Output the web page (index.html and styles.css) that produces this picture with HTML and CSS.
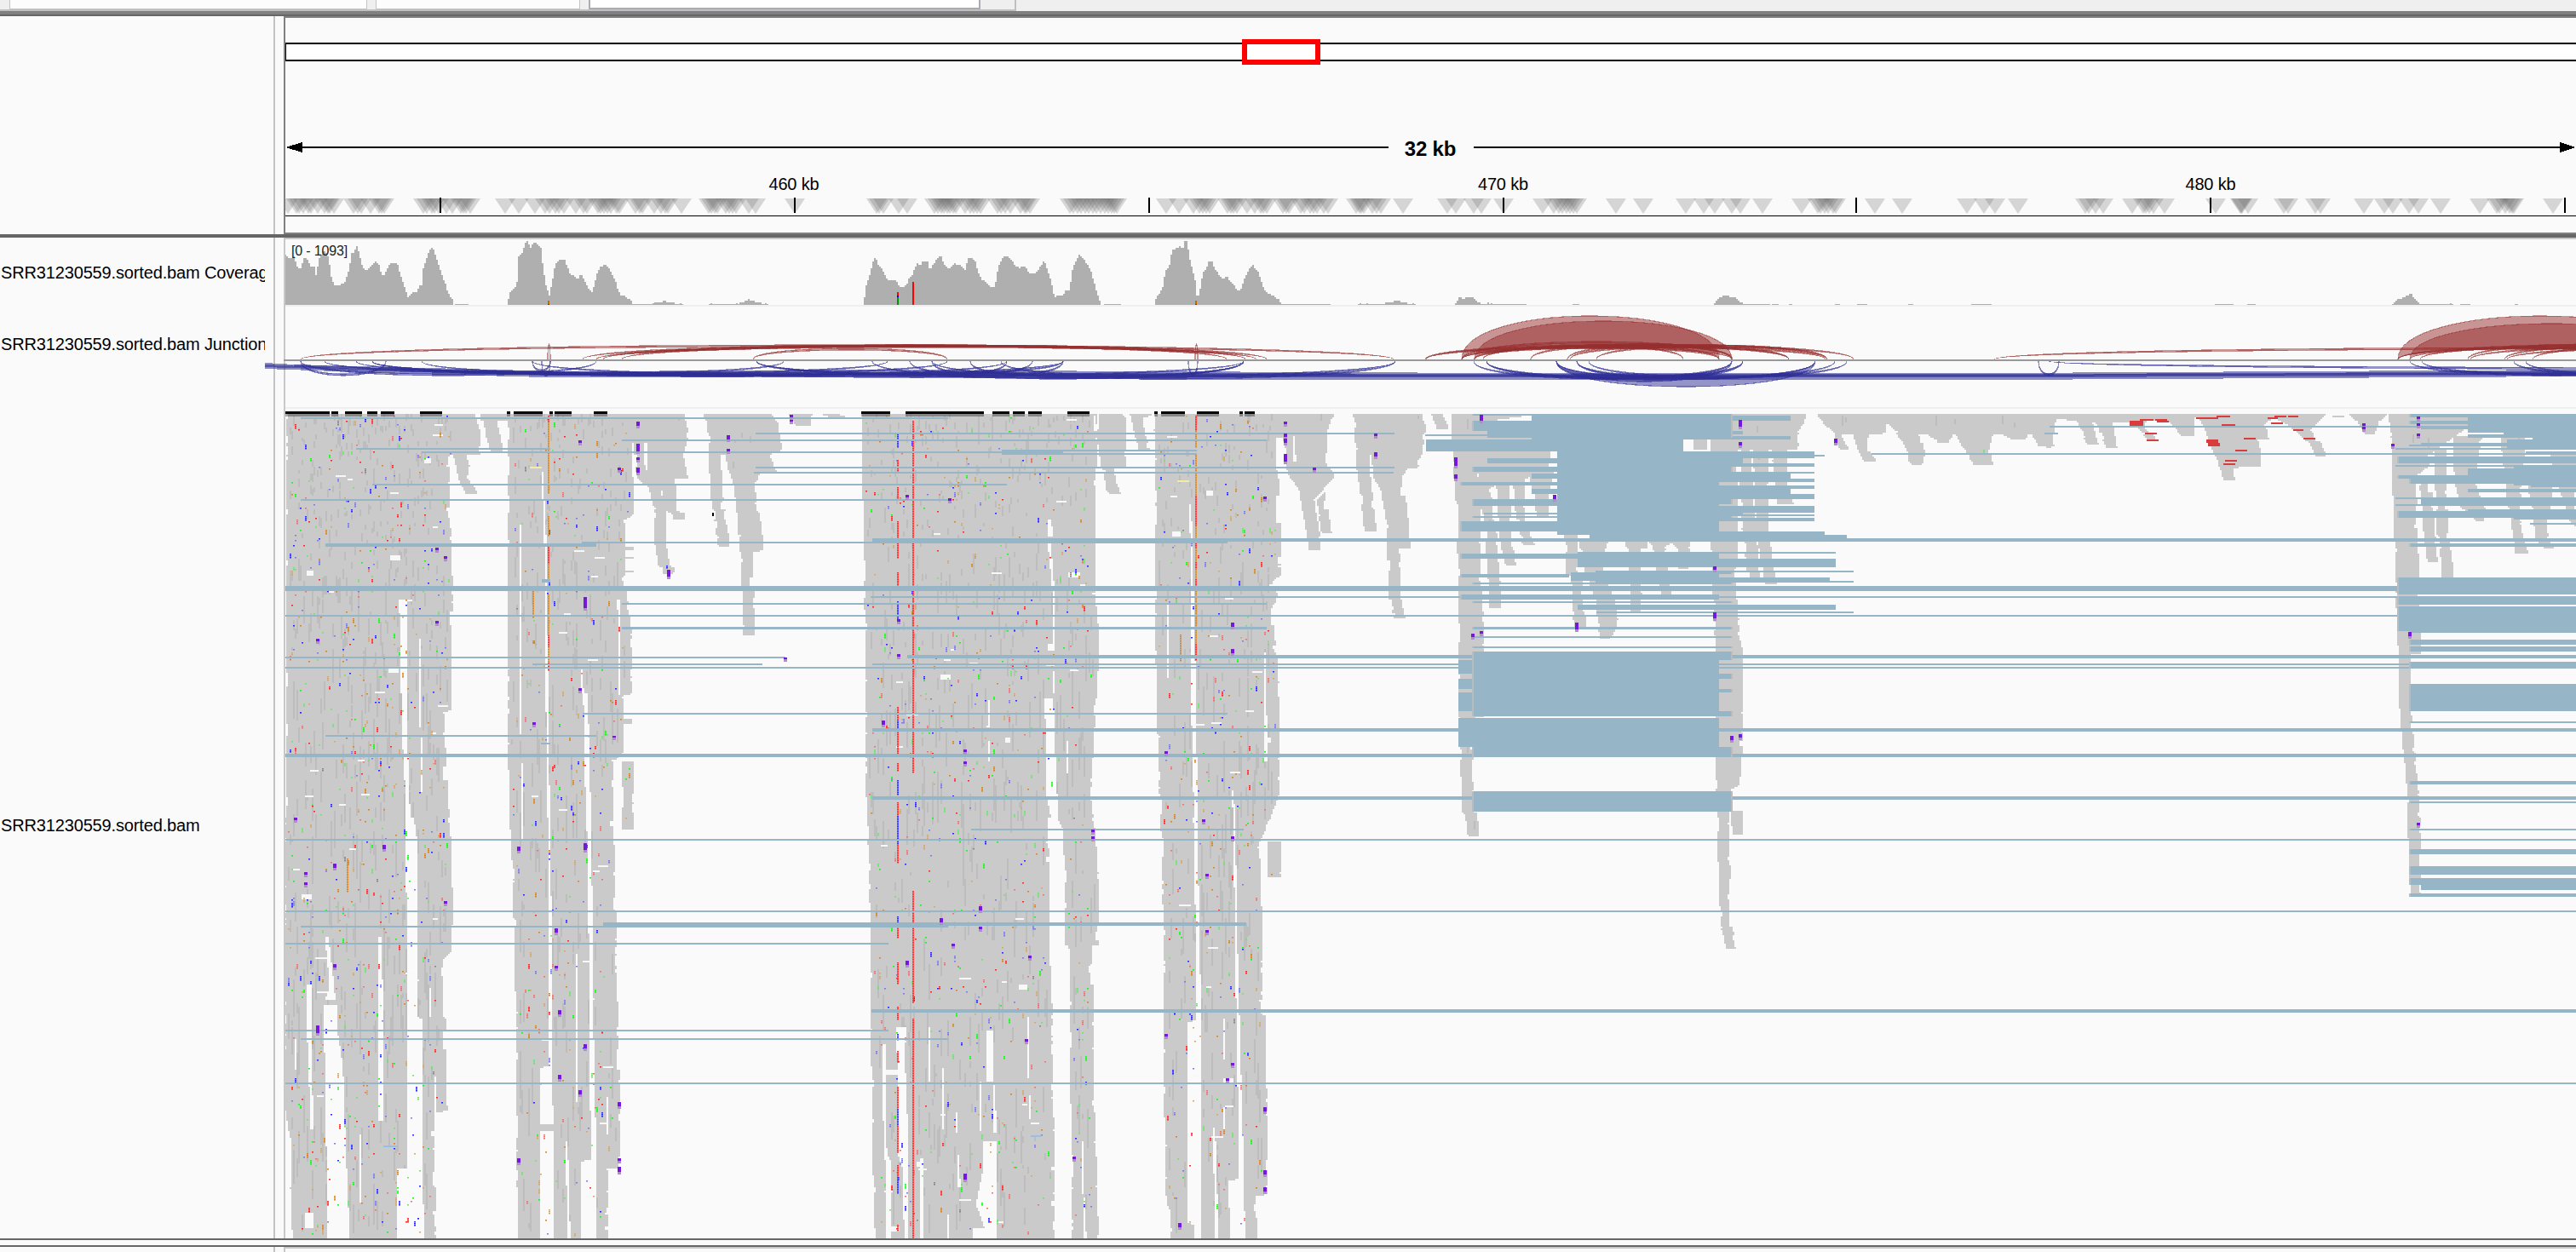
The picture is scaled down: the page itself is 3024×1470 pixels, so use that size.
FILE: index.html
```html
<!DOCTYPE html>
<html lang="en">
<head>
<meta charset="utf-8">
<title>Genome browser</title>
<link rel="stylesheet" href="styles.css">
</head>
<body>
<div class="toolbar">
  <div class="fields">
    <div class="field genome"></div>
    <div class="field chromosome"></div>
    <div class="field locus"></div>
  </div>
</div>
<div class="divider-top"></div>
<div class="row header">
  <div class="names"></div>
  <div class="gutter"></div>
  <div class="data">
    <svg id="ruler" viewBox="335 21 2689 252" width="2689" height="252"></svg>
  </div>
</div>
<div class="row tracks">
  <div class="names">
    <div class="name coverage-name">SRR31230559.sorted.bam Coverage</div>
    <div class="name junction-name">SRR31230559.sorted.bam Junctions</div>
    <div class="name reads-name">SRR31230559.sorted.bam</div>
  </div>
  <div class="gutter"></div>
  <div class="data">
    <svg id="coverage" viewBox="335 281 2689 77" width="2689" height="77"></svg>
    <svg id="junctions" viewBox="335 360 2689 118" width="2689" height="118"></svg>
    <svg id="reads" viewBox="335 480 2689 974" width="2689" height="974"></svg>
  </div>
</div>
<div class="splitter"></div>
<div class="row footer">
  <div class="names"></div>
  <div class="gutter"></div>
  <div class="data"></div>
</div>
<script src="tracks.js"></script>
</body>
</html>
```
FILE: styles.css
```css
* { box-sizing: border-box; }
body {
  margin: 0;
  width: 3024px;
  height: 1470px;
  overflow: hidden;
  display: flex;
  flex-direction: column;
  background: #fafafa;
  color: #000;
  font-family: "Liberation Sans", Arial, sans-serif;
  font-size: 20px;
  letter-spacing: -.15px;
}
svg { display: block; shape-rendering: crispEdges; }
.toolbar { height: 13px; flex: none; background: #efefef; }
.fields {
  width: 1193px;
  height: 13px;
  padding-left: 11px;
  display: flex;
  gap: 10px;
  border-right: 2px solid #c0c0c0;
  border-bottom: 2px solid #c0c0c0;
}
.field { height: 11px; background: #fdfdfd; border: solid #c4c4c4; border-width: 0 1px 1px; }
.genome { width: 420px; }
.chromosome { width: 240px; }
.locus { width: 460px; background: #fff; border-color: #acacb4; border-width: 0 2px 2px; }
.divider-top { height: 6px; flex: none; background: #808080; border-bottom: 2px solid #666; }
.row { display: grid; grid-template-columns: 321px 12px 2691px; flex: none; }
.gutter { border-left: 2px solid #c3c3c3; }
.header { height: 256px; }
.header .data { border: solid #808080; border-width: 2px 0 2px 2px; }
.tracks { height: 1179px; border-top: 4px solid #666; }
.tracks .data { border: solid #c8c8c8; border-width: 2px 0 0 2px; }
.names { padding-right: 10px; min-width: 0; }
.name { overflow: hidden; white-space: nowrap; padding-left: 1px; line-height: 24px; }
.coverage-name { margin-top: 29px; }
.junction-name { margin-top: 60px; }
.reads-name { margin-top: 541px; }
#coverage, #junctions { border-bottom: 2px solid #efefef; box-sizing: content-box; }
#junctions { overflow: visible; position: relative; }
.splitter { height: 10px; flex: none; border: solid #666; border-width: 2px 0; }
.footer { height: 6px; }
.footer .data { border: solid #c8c8c8; border-width: 2px 0 0 2px; }
.scale { font-size: 16px; fill: #222; }
.span { font-size: 24px; font-weight: bold; }
.smooth { shape-rendering: auto; }
```
FILE: tracks.js
```js
const NS = 'http://www.w3.org/2000/svg';
function add(parent, tag, attrs, text) {
  const el = document.createElementNS(NS, tag);
  for (const k in attrs) el.setAttribute(k, attrs[k]);
  if (text) el.textContent = text;
  parent.appendChild(el);
  return el;
}
const $ = id => document.getElementById(id);
const box = (x, y, w, h) => `M${x} ${y}h${w}v${h}h${-w}z`;
let seed = 20559;
const rnd = () => (seed = (seed * 1664525 + 1013904223) % 4294967296) / 4294967296;
const even = v => Math.round(v / 2) * 2;

/* Ruler: ideogram, span arrow, ticks and feature arrows */
(function () {
  const s = $('ruler');
  add(s, 'rect', { x: 335, y: 51, width: 2720, height: 20, fill: '#fff', stroke: '#000', 'stroke-width': 2 });
  add(s, 'rect', { x: 1458, y: 46, width: 92, height: 30, fill: '#f00' });
  add(s, 'rect', { x: 1464, y: 52, width: 80, height: 18, fill: '#fff' });
  add(s, 'path', { d: box(340, 172, 1290, 2) + box(1730, 172, 1280, 2) });
  add(s, 'path', { d: 'M335 173l20 -6v12z' });
  add(s, 'path', { d: 'M3024 173l-19 -6v12z' });
  add(s, 'text', { x: 1679, y: 183, 'text-anchor': 'middle', class: 'span' }, '32 kb');
  [[932, '460 kb'], [1764.5, '470 kb'], [2595, '480 kb']].forEach(([x, t]) =>
    add(s, 'text', { x, y: 223, 'text-anchor': 'middle' }, t));
  const groups = [
    [0, 1.568, [530,545,550,558,567,573,585,598,603,607,614,650,658,665,682,697,702,707,780,786,795,800,807,822,832,848,853,858,866,930,955,984,1004,1012,1022,1028,1038,1060,1074,1080,1100,1105,1112,1118,1125,1135,1140,1170,1177,1182,1204,1217,1224,1230,1254,1304,1310,1316,1320,1336,1342,1348,1354,1378,1391,1463]],
    [1000, 1.568, [45,50,58,87,102,152,158,165,170,175,180,186,192,208,218,224,230,236,268,275,282,292,310,318,322,328,402,408,415,422,430,436,444,450,458,465,472,478,483,488,578,602,628,640,646,652,658,692,698,702,708,728,742,752,758,764,794,800,804,826,832,844,850,856,868,876,928,934,938,942,958,966,973,1014,1096,1112,1144,1158,1200,1271,1292,1302,1308,1316,1322,1328,1335,1406,1457,1535]],
    [2000, 1.531, [0,20,50,66,105,176,205,210,218,224,232,238,307,357,473,503,523,565,686,692,705,718,770,790,794,800,808,828,920,964,966,968,978,1042,1050,1100,1108,1186,1224,1238,1268,1284,1324,1394,1426,1430,1440,1448,1453,1456,1527]]
  ];
  groups.forEach(([o, k, xs]) => xs.forEach(v => {
    const x = Math.round(o + v / k);
    add(s, 'path', { d: `M${x - 12} 233h24l-12 18z`, fill: 'rgba(105,105,105,.25)', class: 'smooth' });
  }));
  add(s, 'path', { d: [516, 932, 1348, 1764, 2178, 2594, 3010].map(x => box(x, 232, 2, 18)).join('') + 'M335 253h2689v1h-2689z' });
})();

/* Coverage histogram */
(function () {
  const s = $('coverage');
  const runs = [
    [0, 1.568, [525,895,533,908,540,900,545,935,553,945,557,905,565,910,570,935,577,935,580,970,585,915,592,880,598,885,604,908,608,970,614,1000,622,1002,633,995,638,965,643,925,646,890,650,885,655,865,660,885,664,930,670,948,676,950,680,935,687,925,690,915,696,930,701,970,707,965,712,940,717,925,723,920,730,928,735,960,740,990,745,1020,749,1045,755,1030,765,1025,770,1005,776,1000,777,945,782,920,787,890,794,865,800,895,808,945,817,990,822,1020,828,1045,833,1055]],
    [0, 1.568, [836,1071,861,1071]],
    [0, 1.568, [933,1065,936,1030,943,1015,950,1000,952,900,960,890,965,850,970,845,975,870,982,850,988,860,994,870,998,940,1003,1000,1010,1040,1014,1000,1020,930,1030,912,1038,910,1042,935,1048,960,1056,970,1062,980,1068,960,1075,985,1080,1010,1088,1030,1092,1000,1098,955,1103,940,1112,925,1118,940,1125,960,1130,980,1135,1010,1140,1035,1150,1042,1160,1055,1165,1070,1200,1071,1206,1062,1222,1058,1238,1064,1256,1071]],
    [0, 1.568, [1306,1071,1312,1065,1328,1065,1332,1071,1352,1071,1366,1060,1378,1052,1392,1062,1413,1071]],
    [1000, 1.568, [21,1060,24,1010,30,975,36,930,40,905,44,915,48,935,55,945,60,970,66,985,80,985,85,1005,92,1010,100,1000,104,975,110,965,118,925,124,935,130,915,138,920,142,945,150,925,155,910,162,898,168,925,174,940,180,940,188,925,194,930,200,935,207,950,212,910,218,905,225,915,232,960,237,980,245,990,252,1005,262,1005,266,960,270,930,275,905,284,900,292,910,298,930,305,940,318,935,325,960,335,962,342,945,348,930,353,915,358,945,363,970,368,1010,372,1050,376,1035,388,1035,392,1022,400,1020,403,960,408,930,413,912,418,893,424,905,432,930,438,950,444,990,450,1030,456,1060]],
    [1000, 1.568, [463,1071,494,1071]],
    [1000, 1.568, [557,1055,563,1035,570,1015,576,950,582,940,588,880,595,872,602,865,608,875,612,843,616,850,620,905,625,945,630,980,633,1040,638,1040,641,1000,645,955,652,940,656,915,662,918,668,950,675,965,682,985,688,970,694,985,700,995,708,1020,715,1015,720,985,726,960,732,940,736,928,742,945,748,960,752,985,757,1015,763,1030,770,1035,778,1045,786,1055,789,1070,826,1071,829,1065,866,1065,868,1071,880,1071]],
    [1000, 1.568, [930,1071,940,1065,952,1071,980,1070,982,1062,995,1060,1002,1052,1010,1062,1022,1065,1036,1071]],
    [1000, 1.568, [1110,1070,1113,1055,1118,1040,1124,1050,1130,1045,1144,1047,1148,1058,1158,1068,1172,1064,1178,1071,1215,1071]],
    [1000, 1.568, [1218,1071,1240,1071]], [1000, 1.568, [1328,1071,1338,1071]],
    [2000, 1.531, [18,1070,24,1050,32,1040,39,1035,46,1045,55,1045,62,1058,69,1065,72,1071,118,1071]],
    [2000, 1.531, [121,1071,127,1071]], [2000, 1.531, [130,1071,133,1071]], [2000, 1.531, [154,1071,157,1071]],
    [2000, 1.531, [236,1071,242,1071]], [2000, 1.531, [277,1071,291,1071]], [2000, 1.531, [366,1071,374,1071]],
    [2000, 1.531, [482,1071,516,1071]], [2000, 1.531, [920,1071,950,1071]], [2000, 1.531, [978,1071,991,1071]],
    [2000, 1.531, [1236,1070,1242,1055,1252,1048,1262,1040,1270,1030,1274,1045,1282,1060,1288,1070,1322,1071,1326,1065,1336,1065,1345,1071]],
    [2000, 1.531, [1358,1071,1376,1071]], [2000, 1.531, [1458,1071,1461,1071]]
  ];
  let d = '';
  runs.forEach(([o, k, p]) => {
    let i = 0;
    const end = o + p[p.length - 2] / k;
    for (let x = even(o + p[0] / k); x < end; x += 2) {
      const u = (x - o) * k;
      while (i < p.length - 4 && p[i + 2] < u) i += 2;
      const t = Math.min(1, Math.max(0, (u - p[i]) / (p[i + 2] - p[i])));
      let y = (p[i + 1] + t * (p[i + 3] - p[i + 1])) / 3;
      y = y > 356 ? Math.round(y) : even(y) + 1;
      y = Math.min(357, y);
      d += box(x, y, 2, 358 - y);
    }
  });
  add(s, 'path', { d, fill: '#afafaf' });
  [[643, 353, 4, '#c86a00'], [643, 357, 1, '#008000'], [1053, 343, 4, '#f00'], [1053, 347, 2, '#00f'], [1053, 349, 9, '#009600'],
   [1071, 331, 26, '#f00'], [1071, 357, 1, '#009600'], [1403, 353, 4, '#c86a00'], [1403, 357, 1, '#008000']]
    .forEach(([x, y, h, fill]) => add(s, 'rect', { x, y, width: 2, height: h, fill }));
  add(s, 'text', { x: 342, y: 300, class: 'scale' }, '[0 - 1093]');
})();

/* Splice junction arcs, forward strand above and reverse strand below */
(function () {
  const s = $('junctions');
  const arc = (x1, x2, outer, inner, rgb) => {
    const b = outer < 423 ? 422 : 424;
    const h = y => b + (y - b) / .75;
    add(s, 'path', {
      d: `M${x1} ${b}C${x1} ${h(outer)} ${x2} ${h(outer)} ${x2} ${b}C${x2} ${h(inner)} ${x1} ${h(inner)} ${x1} ${b}z`,
      fill: `rgba(${rgb},.5)`, stroke: `rgba(${rgb},.5)`, 'stroke-width': 1.2
    });
  };
  const red = '150,45,45', blue = '45,45,150';
  [[353,1636,405],[684,1440,405],[708,1462,405],[730,1487,405],[884,1112,409],[700,1475,406],
   [1673,2176,404],[1716,2100,405],[1730,2145,404],[1741,2018,405],[1797,1976,406],[1840,2034,405],[1843,2100,406],[1874,2145,405],
   [1716,2033,401],[1674,2143,406],[2341,3750,408],[2815,3340,404],[2841,3260,405],[2897,3180,404],[2900,3330,406],[2940,3240,405],[2943,3400,407],[2973,3320,405],[643,646,404],[1403,1406,404]]
    .forEach(([a, b, t]) => arc(a, b, t, t + 2, red));
  arc(1716, 2018, 371, 409, red);
  arc(1731, 2033, 377, 409, red);
  arc(2815, 3151, 371, 409, red);
  arc(2829, 3160, 380, 409, red);
  add(s, 'rect', { x: 333, y: 422, width: 2691, height: 2, fill: '#999' });
  [[353,700,441],[381,1042,440],[418,1112,441],[437,920,440],[437,1248,442],[353,453,441],[495,1182,442],[625,646,436],[625,1460,443],
   [636,646,442],[888,1248,440],[888,1638,444],[1024,1460,445],[1068,1212,440],[1094,1182,439],[1094,1638,445],[1139,1248,440],[1175,1460,442],[1395,1406,441],
   [1730,2033,445],[1745,2046,445],[1745,2154,446],[1851,2131,445],[1865,2168,444],[1851,2046,444],
   [2829,3150,441],[2843,3180,441],[2951,3200,441],[2965,3220,441],[2393,2417,441],[2405,4300,434]]
    .forEach(([a, b, t]) => arc(a, b, t, t - 2, blue));
  arc(1827, 2131, 454, 444, blue);
  arc(1827, 2033, 448, 442, blue);
  const bands = [
    'M311 426L345 428L500 434L700 436L1000 434L1350 436L1768 438L2345 438L2700 436L3024 434V442L2700 444L2345 446H1403L1000 443L640 443L450 438L311 433z',
    'M311 428L420 433L640 436L1000 437L1400 438L1768 439H2345L2700 438L3024 435V440L2700 442L2345 443H1400L1000 441L640 441L450 436L311 431z',
    'M345 428L700 437L1768 440H2345L3024 437V439L2345 442H1768L700 441L345 431z'
  ];
  bands.forEach(d => add(s, 'path', { d, fill: 'rgba(45,45,150,.55)' }));
})();

/* Aligned reads */
(function () {
  const s = $('reads');
  const R = {
    A: [320, 470, 2.24, 3], B: [1000, 470, 2.24, 3], C: [1660, 470, 2.8, 2.376],
    D: [2400, 470, 2.513, 2.613], E: [320, 960, 2.24, 3], F: [1000, 960, 2.24, 3], P: [0, 0, 1, 1]
  };
  const X = (r, x) => R[r][0] + x / R[r][2];
  const Y = (r, y) => R[r][1] + y / R[r][3];

  /* Each entry: region, then keyframes of top, left, right */
  const stacks = [
    ['A', 48,34,532, 100,34,545, 190,34,545, 191,34,466, 500,34,469, 660,34,474, 740,34,476, 741,34,469, 1090,34,469, 1095,34,450, 1280,34,457, 1470,34,465],
    ['A', 48,548,623, 70,548,623, 71,555,590, 130,562,600, 180,574,607],
    ['A', 190,475,510, 230,483,518, 270,488,512, 318,505,538, 330,505,538],
    ['A', 48,618,1083, 120,618,1095, 190,618,1080, 191,618,950, 400,618,950, 420,618,925, 640,618,928, 820,618,945, 1035,618,945, 1036,618,922, 1240,618,922, 1270,620,897, 1470,623,895],
    ['A', 1120,900,945, 1142,900,945], ['A', 1270,918,948, 1470,918,948], ['A', 515,925,950, 530,925,950], ['A', 550,925,950, 556,925,950], ['A', 600,925,950, 606,925,950],
    ['A', 190,958,1080, 270,955,1092, 275,958,1058, 310,990,1062],
    ['A', 310,990,1025, 390,1005,1035, 500,1005,1035, 580,1015,1045, 585,1025,1057, 612,1027,1057],
    ['A', 310,1020,1062, 385,1028,1062, 395,1050,1083, 418,1055,1083],
    ['A', 48,1133,1312, 75,1143,1328, 170,1147,1340, 190,1147,1308],
    ['A', 190,1147,1178, 340,1152,1185, 400,1160,1192, 480,1168,1200, 515,1170,1200],
    ['A', 190,1190,1308, 250,1200,1325, 255,1205,1285, 300,1212,1268, 370,1220,1275, 430,1222,1285, 500,1228,1290, 527,1228,1290, 530,1230,1262, 700,1236,1267, 825,1236,1267],
    ['A', 48,1358,1420, 90,1378,1418], ['A', 48,1447,1492, 60,1475,1520],
    ['B', 48,27,645, 480,30,640, 680,32,640, 820,36,650, 900,36,650, 1000,36,645, 1390,38,628, 1470,40,635],
    ['B', 48,640,713, 60,642,720, 235,650,722], ['B', 235,660,693, 320,670,705, 328,685,712],
    ['B', 48,730,790, 60,735,765, 110,742,770, 180,757,785],
    ['B', 48,795,1270, 60,795,1262, 100,795,1252, 130,797,1115, 330,797,1125, 500,797,1128, 615,797,1128, 650,797,1098, 680,797,1122, 740,797,1105, 950,800,1122, 1380,808,1125, 1470,812,1100],
    ['B', 48,1120,1250, 130,1135,1250, 220,1140,1252, 265,1150,1270, 310,1175,1240],
    ['B', 310,1175,1220, 370,1183,1218, 460,1195,1230, 530,1202,1232],
    ['B', 310,1215,1242, 400,1227,1255, 465,1235,1262],
    ['B', 48,1315,1500, 60,1322,1500, 90,1322,1510, 180,1325,1500, 240,1325,1488],
    ['B', 240,1328,1362, 340,1338,1370, 400,1343,1375, 460,1348,1380],
    ['B', 200,1365,1485, 270,1372,1450, 310,1390,1450, 400,1403,1465, 520,1408,1468, 522,1408,1440, 690,1412,1443, 765,1425,1455],
    ['B', 48,1525,1555, 100,1540,1568],
    ['C', 38,57,95, 75,75,115], ['C', 38,123,390, 60,123,215, 240,133,215, 320,140,218, 450,142,218, 540,146,222, 620,146,230, 700,146,230, 880,148,230, 885,150,196, 1015,153,196, 1145,157,196, 1150,165,205, 1180,173,212, 1218,173,212],
    ['C', 60,195,470, 140,205,450, 200,213,440, 240,213,252, 350,225,262, 370,235,272, 495,238,280, 510,245,285, 578,247,285],
    ['C', 200,270,312, 340,275,320, 400,285,325, 460,298,335], ['C', 200,325,368, 290,330,365, 360,345,375, 405,358,398], ['C', 190,375,465, 250,390,445, 330,405,440],
    ['C', 365,495,535, 480,498,540, 481,512,550, 560,520,560, 630,525,565], ['C', 390,540,640, 430,550,620, 470,560,620, 560,600,660, 610,600,670, 665,612,650],
    ['C', 390,690,765, 410,700,765, 412,705,745, 590,712,750], ['C', 390,768,860, 405,785,825, 540,808,845], ['C', 390,835,905, 410,860,905, 470,870,905],
    ['C', 38,1040,1290, 60,1040,1287, 95,1040,1260, 137,1045,1265],
    ['C', 80,975,1060, 360,975,1063, 540,982,1060, 640,988,1070, 700,990,1080, 970,990,1080, 1070,992,1070, 1085,992,1040, 1190,998,1035, 1310,1000,1040, 1380,1004,1044, 1470,1008,1048, 1500,1020,1055, 1530,1025,1063],
    ['C', 1147,1040,1080, 1213,1042,1080],
    ['C', 138,1068,1105, 360,1078,1125, 510,1100,1137], ['C', 138,1115,1165, 360,1125,1165, 515,1152,1192], ['C', 138,1175,1225, 230,1187,1228, 290,1195,1248],
    ['C', 38,1325,1568, 60,1345,1560, 90,1375,1555, 95,1375,1410, 140,1395,1433], ['C', 90,1440,1505, 140,1460,1500, 172,1480,1522],
    ['P', 486,2210,2410, 496,2216,2410, 502,2222,2410, 510,2232,2400], ['P', 508,2226,2254, 530,2238,2260, 546,2242,2256], ['P', 508,2262,2292, 520,2276,2290],
    ['P', 508,2296,2342, 530,2306,2336, 546,2318,2340], ['P', 508,2348,2380, 516,2360,2378], ['P', 508,2384,2412, 524,2394,2412],
    ['D', 42,0,420, 50,0,400, 60,90,300, 68,100,230], ['D', 50,0,35, 145,0,20], ['D', 60,95,140, 135,125,160], ['D', 60,150,200, 145,182,215],
    ['D', 57,245,300, 72,260,300, 100,290,320, 122,305,330], ['D', 42,360,440, 60,365,440, 112,410,440],
    ['D', 42,440,690, 75,465,650, 120,480,630, 160,495,640, 200,515,640, 205,518,555, 245,528,563], ['D', 80,620,655, 118,630,662],
    ['D', 42,650,830, 60,690,810, 90,740,790, 120,770,800, 125,780,815, 170,800,833], ['D', 47,850,885, 52,850,885], ['D', 42,900,1010, 65,925,985, 103,945,975],
    ['D', 42,1015,1250, 80,1020,1250, 160,1025,1140, 200,1025,1135, 230,1025,1095, 340,1030,1100, 540,1035,1105, 710,1040,1110, 775,1045,1110, 776,1045,1080, 950,1048,1082, 1070,1058,1092, 1130,1065,1100, 1230,1072,1105, 1300,1072,1110, 1420,1075,1110, 1523,1075,1110],
    ['D', 230,1105,1140, 370,1115,1150, 495,1130,1160], ['D', 150,1150,1185, 400,1157,1190, 500,1172,1205, 545,1172,1205],
    ['D', 110,1205,1290, 250,1210,1270, 330,1230,1300, 370,1270,1300], ['D', 110,1345,1420, 300,1365,1405, 380,1378,1410, 468,1390,1427],
    ['D', 250,1425,1500, 420,1450,1485, 455,1475,1508], ['D', 160,1490,1568, 330,1535,1568, 385,1558,1568],
    ['E', 0,32,462, 80,32,470, 330,32,474, 470,32,470, 500,32,447, 700,32,448, 705,32,457, 960,32,457, 1030,32,460, 1035,36,426, 1115,42,427, 1300,45,427, 1305,47,430, 1482,50,430],
    ['E', 0,623,898, 80,627,898, 440,636,905, 720,640,908, 900,640,912, 1230,642,915, 1235,642,883, 1460,645,883, 1482,645,883],
    ['E', 0,918,948, 40,918,948],
    ['F', 0,40,515, 180,45,520, 460,50,520, 700,50,528, 930,52,530, 1482,58,534],
    ['F', 0,540,632, 40,556,640, 240,560,650, 445,560,650, 450,570,632, 640,573,636, 930,573,636, 1070,578,640, 1482,578,650],
    ['F', 0,812,1102, 85,814,1072, 330,818,1078, 650,820,1082, 700,822,1088, 1050,822,1092, 1325,826,1092, 1330,828,1062, 1482,838,1066],
    ['F', 85,1093,1128, 207,1093,1128]
  ];
  const gaps = [
    ['A', 700,333,356, 1200,341,355, 1280,346,357, 1470,350,362], ['A', 840,386,390, 1150,386,390], ['A', 1190,390,394, 1380,390,394],
    ['A', 440,650,654, 1240,652,656, 1470,653,658], ['A', 250,708,712, 345,708,712], ['A', 350,713,717, 640,716,722, 1240,720,727, 1470,722,729],
    ['A', 700,907,916, 1035,909,914], ['A', 150,945,948, 270,945,958], ['A', 150,975,985, 248,980,985], ['A', 1030,817,830, 1240,820,832, 1470,824,838], ['A', 950,812,816, 1030,812,818], ['A', 720,932,945, 740,932,945],
    ['B', 48,645,649, 100,645,649], ['B', 420,516,524, 480,516,530], ['B', 500,515,523, 670,528,533, 860,528,533], ['B', 860,515,532, 880,515,532], ['B', 955,529,533, 1030,529,533], ['B', 1050,505,530, 1170,511,533, 1390,511,540, 1470,525,541],
    ['B', 1200,564,569, 1315,564,569], ['B', 1053,358,363, 1150,356,361], ['B', 1200,358,363, 1270,358,363],
    ['B', 365,887,892, 500,890,896, 650,893,898, 1100,893,906, 1470,900,909], ['B', 720,829,833, 980,829,833], ['B', 890,1083,1088, 1270,1086,1093], ['B', 1375,999,1004, 1470,1003,1008],
    ['B', 130,1114,1130, 220,1114,1136], ['B', 125,1160,1165, 215,1160,1168], ['B', 190,1360,1365, 240,1362,1370], ['B', 310,1240,1250, 345,1218,1224, 380,1218,1226],
    ['E', 0,350,372, 80,349,380, 420,354,380, 700,354,382, 705,354,393, 1230,356,393, 1235,327,394, 1482,327,399],
    ['E', 590,90,103, 740,90,105, 870,95,103, 1100,99,108], ['E', 420,138,147, 590,150,162, 640,138,165], ['E', 660,135,168, 730,134,168, 870,138,185, 1070,140,190, 1300,143,197, 1482,143,203],
    ['E', 420,278,287, 800,278,292, 1070,278,292], ['E', 1118,228,233, 1355,228,233], ['E', 1390,84,108, 1448,84,108], ['E', 780,58,62, 885,58,62], ['E', 1115,40,47, 1300,40,48], ['E', 910,426,430, 1035,426,430], ['E', 600,413,417, 700,413,417],
    ['E', 0,654,658, 75,654,658], ['E', 0,725,730, 440,727,734, 870,727,735, 880,703,735, 1080,703,738], ['E', 1105,703,738, 1482,705,740], ['E', 480,797,802, 1000,798,803], ['E', 1140,771,776, 1482,775,783],
    ['E', 0,826,838, 480,832,842, 720,834,843, 920,834,848, 1200,838,850, 1210,811,850, 1482,813,851], ['E', 985,878,882, 1115,878,882],
    ['F', 0,898,908, 450,905,915, 710,905,918, 720,882,918, 1425,882,918, 1430,900,918, 1482,900,918], ['F', 0,1003,1008, 440,1008,1014, 780,1012,1021, 1150,1018,1029, 1270,1018,1030, 1275,990,1030, 1482,995,1035],
    ['F', 1090,950,955, 1250,952,960, 1482,954,963], ['F', 85,1072,1093, 207,1074,1093], ['F', 710,976,981, 850,976,981], ['F', 1020,977,981, 1100,977,981],
    ['F', 735,115,142, 860,120,140, 1180,121,150, 1230,133,148, 1482,138,150], ['F', 800,82,90, 980,82,90, 1180,84,92, 1210,88,103, 1482,90,103], ['F', 740,202,206, 930,202,207],
    ['F', 880,237,242, 1100,237,242], ['F', 1200,180,188, 1482,180,188], ['F', 1040,273,277, 1110,273,277], ['F', 1190,278,283, 1300,278,285], ['F', 1400,252,256, 1482,252,256], ['F', 750,356,370, 930,356,372], ['F', 930,336,340, 1105,336,342],
    ['F', 1140,345,382, 1240,344,381, 1360,327,381, 1440,348,381, 1441,318,381, 1482,318,381], ['F', 940,372,376, 1110,373,381], ['F', 700,461,466, 920,461,466], ['F', 980,467,471, 1060,467,471], ['F', 1140,605,609, 1320,607,611, 1482,609,617]
  ];
  const TOP = 486, END = 1454;
  const rows = {};
  function rasterize(list, jitter, record) {
    let d = '';
    list.forEach(([r, ...p]) => {
      const y0 = even(Y(r, p[0])), y1 = Math.min(END, even(Y(r, p[p.length - 3])));
      let i = 0, j1 = 0, j2 = 0;
      for (let y = y0; y < y1; y += 2) {
        const v = (y - R[r][1]) * R[r][3];
        while (i < p.length - 6 && p[i + 3] < v) i += 3;
        const t = Math.min(1, Math.max(0, (v - p[i]) / (p[i + 3] - p[i] || 1)));
        if (rnd() < .25) j1 = rnd() < jitter ? 2 : 0;
        if (rnd() < .25) j2 = rnd() < jitter ? 2 + 2 * (rnd() < .2) : 0;
        const a = Math.max(335, even(X(r, p[i + 1] + t * (p[i + 4] - p[i + 1]))) + j1);
        const b = Math.min(3024, even(X(r, p[i + 2] + t * (p[i + 5] - p[i + 2]))) - j2);
        if (b > a) {
          d += box(a, y, b - a, 2);
          if (record) (rows[y] = rows[y] || []).push([a, b]);
        }
      }
    });
    return d;
  }
  add(s, 'path', { d: rasterize(stacks, .2, true), fill: '#cacaca' });

  const inside = (x, y, w) => (rows[even(y)] || []).some(([a, b]) => x > a + 2 && x + w < b - 2);
  const blocks = [[336, 530], [336, 530], [596, 738], [1014, 1290], [1014, 1290], [1356, 1500]];
  const pick = () => { const b = blocks[Math.floor(rnd() * blocks.length)]; return even(b[0] + rnd() * (b[1] - b[0])); };

  /* Read boundaries */
  let edge = '';
  for (let n = 0; n < 2300; n++) {
    const x = n % 6 ? pick() : even(740 + rnd() * 2280);
    const y = even(TOP + Math.pow(rnd(), 1.4) * 960);
    const h = even(4 + rnd() * (y < 650 ? 8 : y < 800 ? 26 : 40));
    if (inside(x, y, 2) && inside(x, y + h, 2)) edge += box(x, y, 2, h);
  }
  add(s, 'path', { d: edge, fill: '#bdbdbd' });

  add(s, 'path', { d: rasterize(gaps, 0, false), fill: '#fafafa' });

  /* Low quality reads */
  let white = '';
  for (let n = 0; n < 120; n++) {
    const x = pick(), y = even(TOP + rnd() * 960), w = even(6 + rnd() * 8);
    if (inside(x, y, w)) white += box(x, y, w, rnd() < .2 ? 6 : 2);
  }
  add(s, 'path', { d: white, fill: '#f8f8f8' });

  /* Mismatched bases */
  const snp = { '#ee2c2c': '', '#1ff01f': '', '#2a2af0': '', '#cf8630': '', '#e07878': '', '#7c7ce0': '', '#cfa878': '', '#78dc78': '', '#888888': '' };
  const keys = Object.keys(snp);
  for (let n = 0; n < 2300; n++) {
    const x = n % 14 ? pick() : even(740 + rnd() * 2280), y = even(TOP + 2 + rnd() * 960);
    if (inside(x, y, 2)) {
      const k = keys[Math.floor(rnd() * (rnd() < .15 ? 9 : 8))];
      const reps = rnd() < .35 ? 2 + Math.floor(rnd() * 2) : 1;
      for (let q = 0; q < reps; q++) snp[k] += box(x, y + q * 2, 2, 1.6);
    }
  }
  keys.forEach(k => add(s, 'path', { d: snp[k], fill: k, class: 'smooth' }));

  function column(x, y0, y1, colors, keep) {
    let run = 0, on = true, c = colors[0];
    for (let y = y0; y < y1; y += 2) {
      if (run-- <= 0) { on = rnd() < keep; run = 2 + rnd() * 7; c = colors[Math.floor(rnd() * colors.length)]; }
      if (on) add(s, 'rect', { x, y, width: 2, height: 1.4, fill: c, class: 'smooth' });
    }
  }
  const orange = '#cf8630', bright = '#ee2c2c', indigo = '#2a2af0';
  column(643, 488, 788, [orange, orange, orange, bright], .8);
  column(625, 660, 755, [orange], .6);
  column(1403, 488, 788, [orange, orange, orange, bright], .8);
  column(1385, 745, 788, [orange], .7);
  column(1071, 494, 908, [bright], .95);
  column(1071, 1046, 1454, [bright], .9);
  column(1053, 488, 1450, [bright, indigo, bright], .5);
  column(407, 998, 1048, [orange], .7);

  /* Skipped regions: x from, x to, y, height */
  const lines = [
    [353,1113,490,2],[887,1637,508,2],[730,1487,516,2],[418,646,526,2],[495,1176,530,2],[1176,1248,528,6],[1248,1405,528,2],[1248,1405,532,2],
    [887,1637,548,2],[885,1636,554,2],[437,1182,568,2],[353,1113,586,2],[683,1441,636,2],[382,700,638,4],[1024,3024,632,4],[335,3024,688,6],
    [1022,3024,700,2],[730,1487,708,2],[335,3024,722,2],[730,1487,736,3],[1065,3024,769,4],[335,922,771,2],[1024,3024,779,2],[625,895,779,2],
    [335,3024,783,2],[684,1441,837,2],[1024,3024,855,4],[382,700,863,2],[335,3024,885,4],[1024,3024,935,4],[1140,1460,973,2],[335,3024,985,2],
    [335,3024,1069,2],[708,1463,1083,4],[708,1113,1087,2],[353,708,1087,2],[335,1043,1107,2],[1023,3024,1185,4],[335,1043,1209,2],[353,1113,1219,2],
    [335,3024,1271,2],[636,646,680,4],[635,646,872,2],[2406,2897,500,2],[2400,2416,508,2],[2197,2965,532,2],[1673,1760,510,2]
  ];
  const mid = [[385,1042,38,105],[195,385,57,86],[240,385,86,105],[195,1042,38,43],[1042,1237,43,57],[38,885,109,143],[38,240,95,100],[385,885,100,143],[885,1237,100,109],[1042,1082,86,95],[470,1002,143,375],[470,1315,143,162],[1315,1350,152,157],[240,470,162,176],[1002,1082,162,176],[1002,1315,176,185],[195,470,185,200],[1002,1042,185,200],[1002,1237,200,228],[1002,1315,200,204],[1237,1315,219,228],[385,470,204,219],[157,470,228,238],[1002,1315,238,247],[1002,1237,247,262],[385,470,247,261],[1002,1315,261,276],[195,470,276,295],[1002,1042,276,290],[1002,1315,295,314],[1002,1082,314,318],[1002,1315,318,323],[1002,1042,323,328],[1002,1315,328,337],[230,470,314,318],[195,470,323,328],[157,1002,337,366],[510,1350,366,375],[577,1422,375,394],[157,537,428,442],[537,1385,423,428],[537,1002,423,466],[1002,1385,442,466],[597,1002,475,513],[157,510,485,494],[515,1002,480,504],[1002,1445,475,480],[1002,1042,480,485],[1002,1365,494,504],[1002,1445,504,508],[195,1042,508,513],[157,1002,542,556],[195,1042,561,566],[537,1385,570,584],[600,1445,589,594],[195,1042,632,639],[195,1042,658,663],[195,1042,687,691],[195,1002,701,881],[146,196,725,763],[146,196,777,805],[146,196,815,867],[1002,1042,701,725],[1002,1042,763,777],[1002,1042,805,815],[1002,1042,867,881],[146,1002,886,967],[195,1042,967,995],[195,1042,1090,1147]];
  const right = [[1080,1250,42,52],[1250,1568,42,100],[1080,1250,63,73],[1110,1250,78,89],[1355,1568,100,115],[1250,1360,104,115],[1365,1568,120,152],[1440,1568,115,120],[1110,1365,131,141],[1075,1365,136,141],[1035,1365,146,152],[1420,1568,157,167],[1045,1568,172,193],[1035,1568,199,204],[1250,1568,209,256],[1385,1568,204,209],[1045,1250,230,240],[1080,1250,240,256],[1385,1568,256,261],[1435,1568,261,267],[1250,1568,272,282],[1035,1110,298,303],[1110,1568,298,324],[1035,1110,319,324],[1250,1568,335,340],[1045,1568,340,361],[1385,1568,361,366],[1432,1568,376,382],[1080,1568,439,449],[1045,1568,544,596],[1045,1568,601,627],[1045,1568,632,708],[1080,1568,708,713],[1080,1568,734,750],[1080,1568,755,771],[1080,1568,802,823],[1080,1568,870,954],[1080,1568,985,990],[1080,1568,1168,1179],[1080,1568,1231,1236],[1080,1568,1315,1320],[1080,1568,1377,1393],[1080,1568,1429,1456],[1080,1568,1466,1487],[1110,1568,1487,1503],[1080,1568,1513,1524]];
  let skip = '', lip = '';
  lines.forEach(([a, b, y, h]) => { skip += box(a, y, b - a, h); });
  [['C', mid], ['D', right]].forEach(([r, list]) => list.forEach(([a, b, t, u]) => {
    const x0 = Math.round(X(r, a)), x1 = Math.min(3024, Math.round(X(r, b))), y0 = Math.round(Y(r, t)), y1 = Math.round(Y(r, u));
    skip += box(x0, y0, x1 - x0, y1 - y0);
    if ([157, 195, 1080, 1045].includes(a)) lip += box(x0 - 2, y0, 2, y1 - y0);
    if (b === 1042) lip += box(x1, y0, 2, y1 - y0);
  }));
  add(s, 'path', { d: box(1976, 514, 32, 16), fill: '#fafafa' });
  add(s, 'path', { d: box(1988, 514, 16, 14) + box(2008, 512, 32, 18), fill: '#cacaca' });
  add(s, 'path', { d: skip, fill: '#96b5c7' });
  add(s, 'path', { d: lip, fill: '#b9bcbe' });

  /* Reads with abnormal insert size */
  const large = [[251,291,62,78],[281,322,57,62],[327,362,57,62],[332,367,62,67],[297,332,99,104],[302,337,120,125],[447,513,52,57],[508,548,47,52],[523,563,73,78],[477,513,120,130],[482,518,130,141],[588,623,115,120],[563,598,152,157],[533,568,183,188],[528,563,193,199],[658,690,52,57],[678,714,47,52],[719,750,47,52],[668,704,68,73],[734,765,89,94],[764,799,115,120]];
  add(s, 'path', { d: large.map(([a, b, t, u]) => box(even(X('D', a)), even(Y('D', t)), even((b - a) / 2.513), Math.max(2, even((u - t) / 2.613)))).join(''), fill: '#d93c3c' });
  add(s, 'path', { d: box(622, 548, 14, 2) + box(1382, 564, 14, 2), fill: '#f5eca0' });
  add(s, 'path', { d: box(450, 1345, 16, 2) + box(1210, 1333, 12, 2), fill: '#96c0e8' });
  add(s, 'rect', { x: 836, y: 602, width: 2, height: 4 });

  /* Insertions: region, centre, top, bottom */
  const ins = [['A',960,75,90,960,153,180,960,201,210,960,237,256,1198,123,138,1198,171,180,808,141,150,911,237,245,1365,51,60,1365,69,75,432,519,528,454,549,558,1041,597,620,822,693,732,432,777,786,118,840,850,808,1014,1023,687,1134,1143,60,1470,1480,898,1182,1186,1348,906,911],
    ['B',1140,75,85,1140,117,130,1140,135,150,1140,189,216,1378,117,126,1378,183,198,1216,237,247,145,333,342,257,345,354,1086,339,348,123,771,780,1001,783,797,1001,876,891,123,894,903,82,1128,1143,826,1236,1245,297,1230,1239,297,1272,1281,925,1476,1485],
    ['C',221,40,57,137,159,182,137,207,220,462,264,276,1072,55,75,1072,116,125,1385,107,120,988,463,473,534,620,640,988,592,608,193,651,660,221,645,653,1044,936,948,1072,931,940],
    ['D',1103,50,57,1103,71,78,1103,102,110,942,71,78,942,81,89,1028,133,141,1078,711,724,1103,1296,1304],
    ['E',293,96,110,647,102,117,822,90,114,163,162,176,87,192,202,87,228,237,454,294,303,745,390,405,163,516,528,745,522,531,754,678,692,118,732,760,822,798,813,754,906,921,808,960,975,911,1002,1017,647,1200,1215,911,1200,1209,911,1230,1247],
    ['F',633,42,51,633,66,75,1001,66,75,934,198,207,338,312,327,235,354,369,338,384,393,934,396,405,266,444,453,145,504,519,468,486,495,459,780,789,826,762,771,1001,864,873,987,918,927,1086,1020,1035,584,1194,1203,1086,1242,1257,1086,1302,1316,297,1254,1275,862,1428,1443]];
  let purple = '', pale = '';
  ins.forEach(([r, ...p]) => {
    for (let i = 0; i < p.length; i += 3) {
      const x = Math.round(X(r, p[i])) - 2, y = Math.round(Y(r, p[i + 1])), h = Math.max(2, Math.round((p[i + 2] - p[i + 1]) / R[r][3]));
      purple += box(x, y, 4, h);
      pale += box(x, y + h, 4, 3);
    }
  });
  add(s, 'path', { d: pale, fill: '#ad90c8' });
  add(s, 'path', { d: purple, fill: '#7418dc' });

  /* Downsampled regions */
  let bars = '';
  [['A', 34,150,155,172,190,235,249,276,284,320,388,446,616,625,634,710,728,737,741,786,844,880],
   ['B', 25,101,141,347,370,414,423,455,464,500,567,625,795,804,813,876,907,965,1019,1028,1033,1060]].forEach(([r, ...p]) => {
    for (let i = 0; i < p.length; i += 2) bars += box(Math.round(X(r, p[i])), 483, Math.round((p[i + 1] - p[i]) / 2.24), 3);
  });
  add(s, 'path', { d: bars });
  add(s, 'path', { d: bars, fill: 'rgba(0,0,0,.33)', transform: 'translate(0 3)' });
})();
```
